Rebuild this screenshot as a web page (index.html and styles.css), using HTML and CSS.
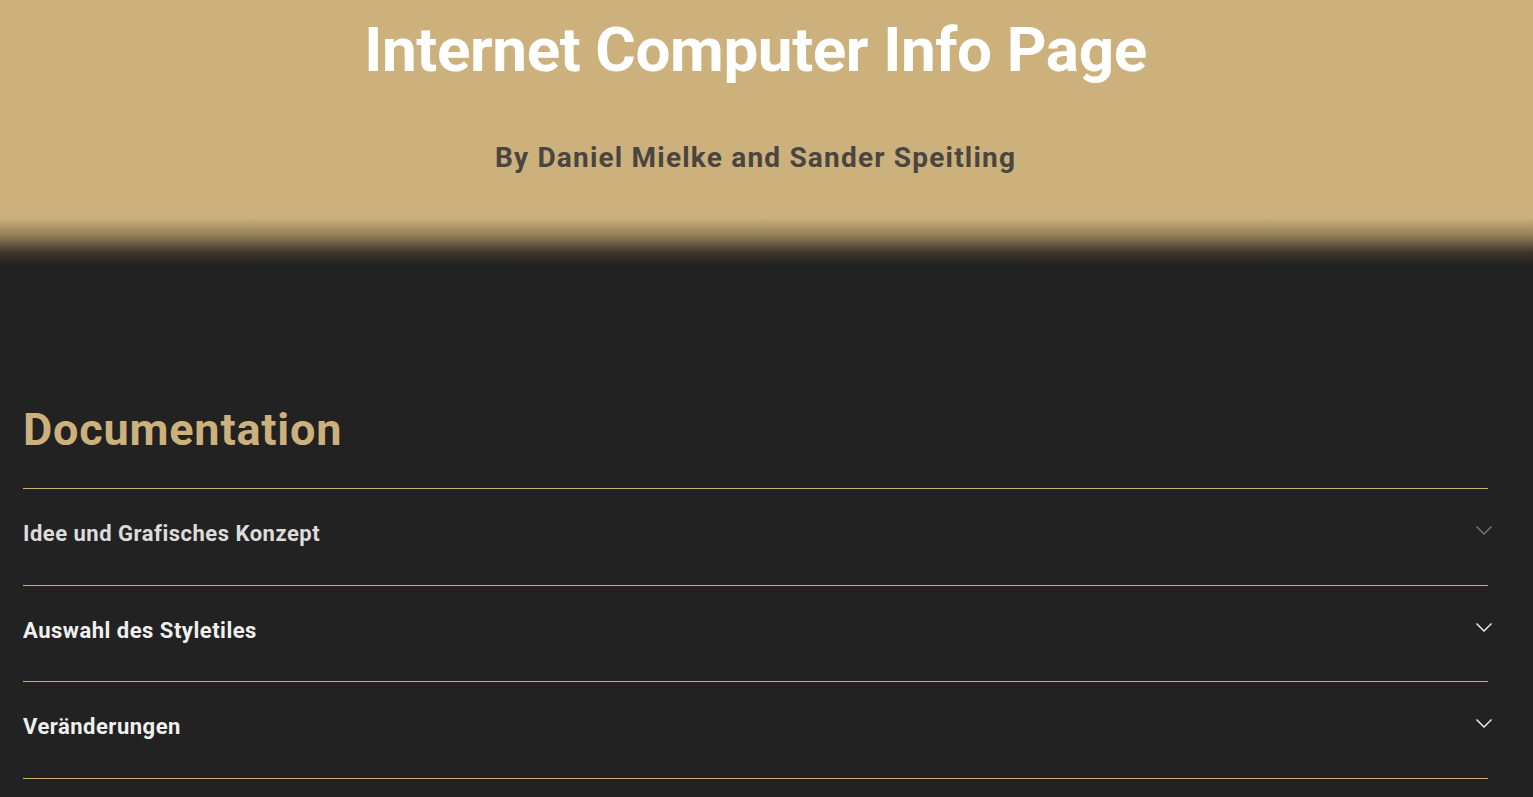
FILE: index.html
```html
<!DOCTYPE html>
<html lang="de">
<head>
<meta charset="utf-8">
<title>Internet Computer Info Page</title>
<link rel="stylesheet" href="styles.css">
</head>
<body>
<header class="hero">
  <div class="container">
    <h1 class="hero-title">Internet Computer Info Page</h1>
    <p class="hero-sub">By Daniel Mielke and Sander Speitling</p>
  </div>
</header>
<main class="container docs">
  <h2 class="docs-title">Documentation</h2>
  <div class="accordion">
    <div class="acc-item acc-item--dim">
      <span class="acc-label">Idee und Grafisches Konzept</span>
      <svg class="chev" width="16" height="9" viewBox="0 0 16 9"><path d="M0.5 0.5 L8 8 L15.5 0.5" fill="none" stroke="currentColor" stroke-width="1.4"/></svg>
    </div>
    <div class="acc-item">
      <span class="acc-label">Auswahl des Styletiles</span>
      <svg class="chev" width="16" height="9" viewBox="0 0 16 9"><path d="M0.5 0.5 L8 8 L15.5 0.5" fill="none" stroke="currentColor" stroke-width="1.4"/></svg>
    </div>
    <div class="acc-item">
      <span class="acc-label">Veränderungen</span>
      <svg class="chev" width="16" height="9" viewBox="0 0 16 9"><path d="M0.5 0.5 L8 8 L15.5 0.5" fill="none" stroke="currentColor" stroke-width="1.4"/></svg>
    </div>
  </div>
</main>
</body>
</html>
```
FILE: styles.css
```css
html, body {
  margin: 0;
  padding: 0;
  background: #222222;
  font-family: Roboto, "Open Sans", sans-serif;
}
.container {
  margin: 0 45px 0 23px;
}
.hero {
  height: 265px;
  background: linear-gradient(to bottom, #cdb17c 0, #cdb17c 218px, #8f7c58 236px, #3a342a 253px, #222222 266px);
  text-align: center;
  overflow: hidden;
}
.hero-title {
  margin: 0;
  padding-top: 13px;
  font-size: 62px;
  line-height: 74px;
  font-weight: 700;
  color: #ffffff;
  letter-spacing: -0.4px;
}
.hero-sub {
  margin: 54px 0 0;
  font-size: 28px;
  line-height: 34px;
  font-weight: 700;
  color: #4a4540;
  letter-spacing: 1.2px;
}
.docs {
  padding-top: 138px;
}
.docs-title {
  margin: 0 0 31px;
  font-size: 45px;
  line-height: 54px;
  font-weight: 700;
  color: #cdb17c;
  letter-spacing: 0.8px;
}
.accordion {
  display: flex;
  flex-direction: column;
}
.acc-item {
  display: flex;
  justify-content: space-between;
  align-items: flex-start;
  border-top: 1px solid #d0ae70;
  padding: 30px 0 35.67px;
  color: #f0f0f0;
}
.acc-item:last-child {
  border-bottom: 1px solid #d0ae70;
}
.acc-label {
  font-size: 22px;
  line-height: 30px;
  font-weight: 700;
  letter-spacing: 0.5px;
}
.chev {
  display: block;
  margin: 7px -4px 0 0;
  color: #f4f4f4;
}
.acc-item--dim .acc-label {
  color: #dcdcdc;
}
.acc-item--dim .chev {
  color: #777777;
}
```
